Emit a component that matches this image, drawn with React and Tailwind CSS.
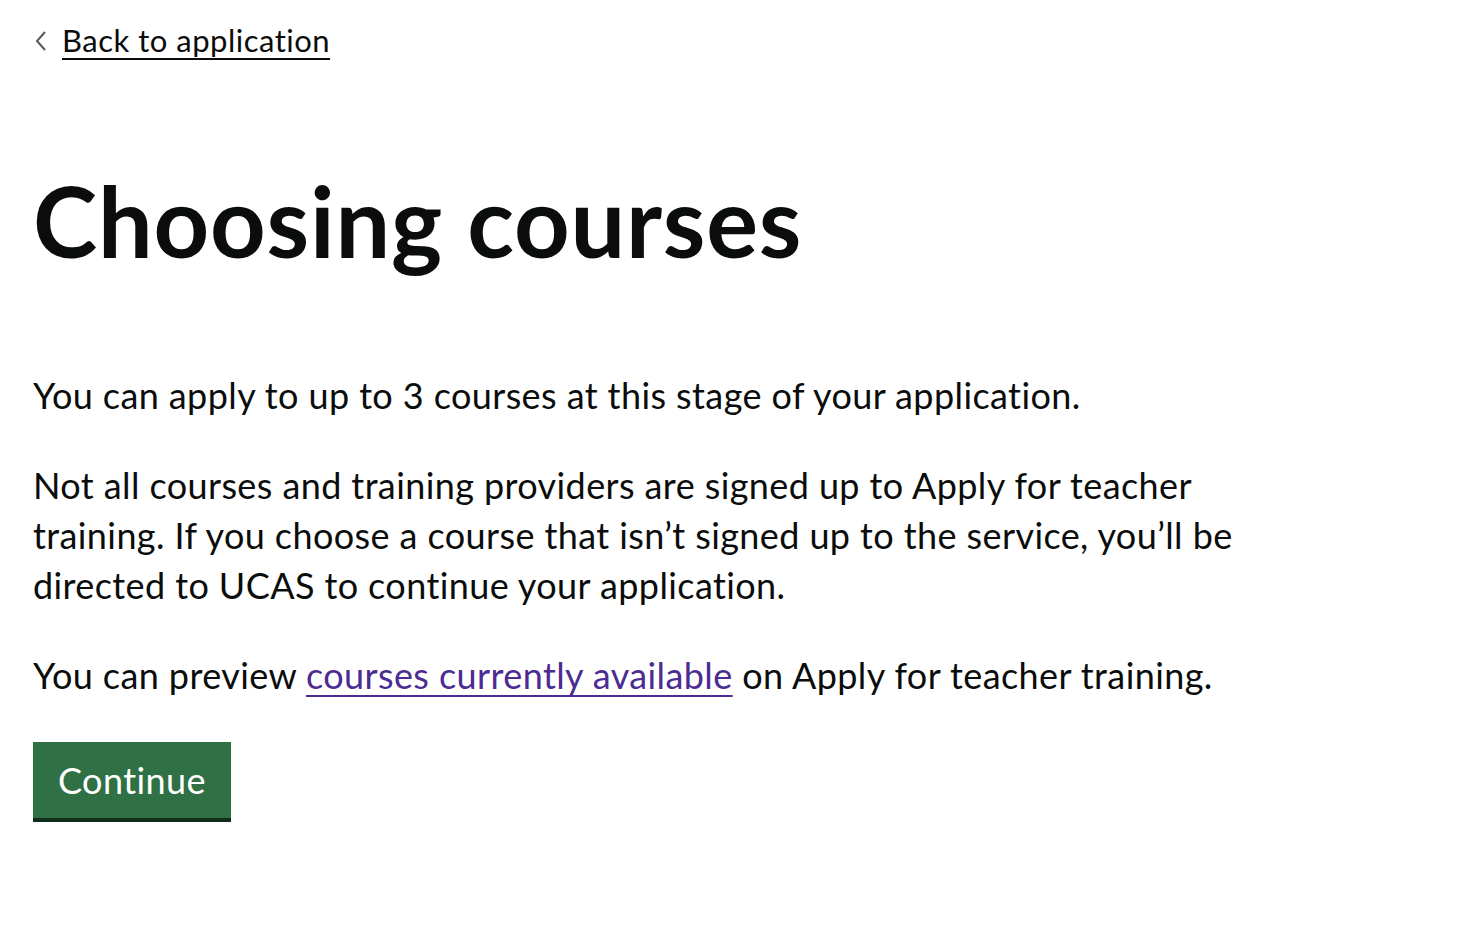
import React from "react";

export default function App() {
  return (
    <div className="min-h-screen bg-white text-[#0b0c0c] px-[33px]" style={{ fontFamily: "Lato, 'Noto Sans', sans-serif" }}>
      <div className="pt-[20px]">
        <a href="#" className="inline-flex items-center gap-[15px] text-[31px] leading-[40px] tracking-[0.5px] text-[#0b0c0c] underline decoration-[2px] underline-offset-[6px]">
          <svg width="12" height="22" viewBox="0 0 12 22" className="mt-[1px] ml-[2px]">
            <path d="M10 2 L2 11 L10 20" fill="none" stroke="#505a5f" strokeWidth="2" />
          </svg>
          Back to application
        </a>
      </div>
      <h1 className="mt-[111px] text-[97px] leading-[100px] font-bold tracking-[0.8px]">Choosing courses</h1>
      <div className="mt-[99px] max-w-[1270px] text-[36px] leading-[50px] tracking-[0.4px]">
        <p>You can apply to up to 3 courses at this stage of your application.</p>
        <p className="mt-[40px]">
          Not all courses and training providers are signed up to Apply for teacher training. If you choose a course that isn’t signed up to the service, you’ll be directed to UCAS to continue your application.
        </p>
        <p className="mt-[40px]">
          You can preview{" "}
          <a href="#" className="text-[#4c2c92] underline decoration-[2px] underline-offset-[6px]">courses currently available</a>{" "}
          on Apply for teacher training.
        </p>
      </div>
      <button className="mt-[42px] h-[80px] px-[25px] bg-[#2f7044] text-white text-[36px] leading-[50px] tracking-[0.4px] border-b-[4px] border-[#0f2d1a]">
        Continue
      </button>
    </div>
  );
}
